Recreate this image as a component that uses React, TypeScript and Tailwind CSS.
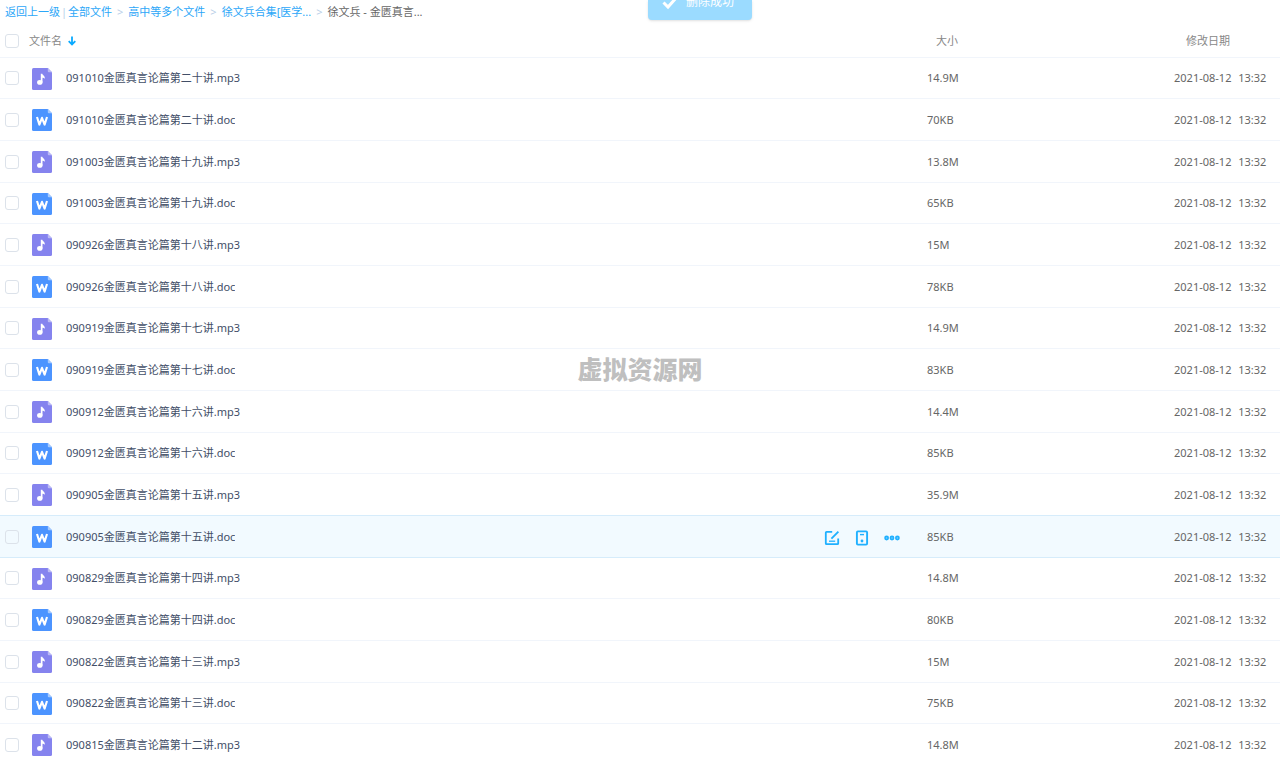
import React from 'react';

type Kind = 'mp3' | 'doc';

interface FileEntry {
  stem: string;
  kind: Kind;
  size: string;
}

const files: FileEntry[] = [
  { stem: '091010金匮真言论篇第二十讲', kind: 'mp3', size: '14.9M' },
  { stem: '091010金匮真言论篇第二十讲', kind: 'doc', size: '70KB' },
  { stem: '091003金匮真言论篇第十九讲', kind: 'mp3', size: '13.8M' },
  { stem: '091003金匮真言论篇第十九讲', kind: 'doc', size: '65KB' },
  { stem: '090926金匮真言论篇第十八讲', kind: 'mp3', size: '15M' },
  { stem: '090926金匮真言论篇第十八讲', kind: 'doc', size: '78KB' },
  { stem: '090919金匮真言论篇第十七讲', kind: 'mp3', size: '14.9M' },
  { stem: '090919金匮真言论篇第十七讲', kind: 'doc', size: '83KB' },
  { stem: '090912金匮真言论篇第十六讲', kind: 'mp3', size: '14.4M' },
  { stem: '090912金匮真言论篇第十六讲', kind: 'doc', size: '85KB' },
  { stem: '090905金匮真言论篇第十五讲', kind: 'mp3', size: '35.9M' },
  { stem: '090905金匮真言论篇第十五讲', kind: 'doc', size: '85KB' },
  { stem: '090829金匮真言论篇第十四讲', kind: 'mp3', size: '14.8M' },
  { stem: '090829金匮真言论篇第十四讲', kind: 'doc', size: '80KB' },
  { stem: '090822金匮真言论篇第十三讲', kind: 'mp3', size: '15M' },
  { stem: '090822金匮真言论篇第十三讲', kind: 'doc', size: '75KB' },
  { stem: '090815金匮真言论篇第十二讲', kind: 'mp3', size: '14.8M' },
];

const ACTIVE_ROW = 11;

function FileIcon({ kind }: { kind: Kind }) {
  const audio = kind === 'mp3';
  return (
    <svg width="20" height="22" viewBox="0 0 20 22" className="mt-px shrink-0" aria-hidden="true">
      <path d="M1.5 0H15.8L20 4.2V20.5Q20 22 18.5 22H1.5Q0 22 0 20.5V1.5Q0 0 1.5 0Z" fill={audio ? '#8583ee' : '#4c94ff'} />
      <path d="M15.8 0L20 4.2H16.8Q15.8 4.2 15.8 3.2Z" fill={audio ? '#bbbaf6' : '#a6caff'} />
      {audio ? (
        <g fill="#fff">
          <ellipse cx="7.8" cy="14.4" rx="2.7" ry="2.4" />
          <path d="M8.8 5.8H10.3C10.5 7.4 12.8 7.6 12.8 9.8V10.8C11.9 10 11.3 9.8 10.5 9.8V14.4H8.8Z" />
        </g>
      ) : (
        <path d="M5 8L7.4 15.6L10 8.8L12.6 15.6L15 8" fill="none" stroke="#fff" strokeWidth="2.1" strokeLinejoin="round" />
      )}
    </svg>
  );
}

function Tick({ label }: { label: string }) {
  return (
    <input
      type="checkbox"
      aria-label={label}
      className="block size-[14px] shrink-0 appearance-none rounded-[3px] border border-[#dce2ea] bg-transparent checked:bg-[#09aaff]"
    />
  );
}

function RowActions() {
  return (
    <div className="flex items-center gap-3.5 pt-0.5 text-[#1fb0ff]">
      <button type="button" aria-label="编辑" className="size-4">
        <svg width="16" height="16" viewBox="0 0 16 16" fill="none" stroke="currentColor" strokeWidth="1.8">
          <path d="M8.2 1.8H2.6Q1.8 1.8 1.8 2.6V13.4Q1.8 14.2 2.6 14.2H13.4Q14.2 14.2 14.2 13.4V8.6" />
          <path d="M14.4 1.6L7.4 8.6" />
          <path d="M5 11.2H11.2" strokeWidth="1.3" />
        </svg>
      </button>
      <button type="button" aria-label="发送到手机" className="size-4">
        <svg width="16" height="16" viewBox="0 0 16 16" fill="none" stroke="currentColor" strokeWidth="1.9">
          <rect x="2.9" y="1.4" width="10.2" height="13.2" rx="1" />
          <path d="M6 4.6H10" strokeWidth="1.4" />
          <circle cx="8" cy="11" r="1.4" fill="currentColor" stroke="none" />
        </svg>
      </button>
      <button type="button" aria-label="更多" className="size-4">
        <svg width="16" height="16" viewBox="0 0 16 16" fill="none" stroke="currentColor" strokeWidth="1.6">
          <circle cx="2.6" cy="8" r="1.6" fill="#7fd0ff" />
          <circle cx="8" cy="8" r="1.6" fill="#7fd0ff" />
          <circle cx="13.4" cy="8" r="1.6" fill="#7fd0ff" />
        </svg>
      </button>
    </div>
  );
}

function Breadcrumb() {
  const link = 'text-[#2ca7f8]';
  const sep = 'px-[5px] text-[#b9cfe8]';
  return (
    <nav aria-label="路径" className="flex h-6 items-center whitespace-nowrap pl-[5px]">
      <a href="#back" className={link}>返回上一级</a>
      <span className="px-px text-[#b9cfe8]">|</span>
      <a href="#all" className={link}>全部文件</a>
      <span className={sep}>&gt;</span>
      <a href="#school" className={link}>高中等多个文件</a>
      <span className={sep}>&gt;</span>
      <a href="#collection" className={link}>徐文兵合集[医学...</a>
      <span className={sep}>&gt;</span>
      <span className="text-[#666]">徐文兵 - 金匮真言...</span>
    </nav>
  );
}

function FileRow({ file, index }: { file: FileEntry; index: number }) {
  const active = index === ACTIVE_ROW;
  const line = active || index === ACTIVE_ROW - 1 ? 'border-[#d6ecfb]' : 'border-[#f1f5fb]';
  const cell = `border-b p-0 ${line}`;
  const name = `${file.stem}.${file.kind}`;
  return (
    <tr className={`h-[42px] nth-[3n+1]:h-[41px] ${active ? 'bg-[#f2faff]' : ''}`}>
      <td className={cell}>
        <div className="flex items-center pl-[5px] pr-[27px]">
          <Tick label={name} />
          <div className="ml-[13px] flex min-w-0 flex-1 items-center gap-3.5">
            <FileIcon kind={file.kind} />
            <span className="truncate text-[#424e67]">{name}</span>
          </div>
          {active && <RowActions />}
        </div>
      </td>
      <td className={cell}>{file.size}</td>
      <td className={cell}>
        <time dateTime="2021-08-12T13:32" className="whitespace-nowrap">
          2021-08-12 <span className="ml-1">13:32</span>
        </time>
      </td>
    </tr>
  );
}

export default function App() {
  return (
    <div className="relative h-screen overflow-hidden bg-white font-['Noto_Sans','Noto_Sans_CJK_SC',sans-serif] text-[11px] leading-4 text-[#666]">
      <Breadcrumb />
      <table className="w-full table-fixed border-separate border-spacing-0 text-left">
        <colgroup>
          <col />
          <col className="w-[247px]" />
          <col className="w-[106px]" />
        </colgroup>
        <thead>
          <tr className="h-[34px] text-[#888]">
            <th className="border-b border-[#f1f5fb] p-0 font-normal">
              <div className="flex items-center pl-[5px]">
                <Tick label="全选" />
                <span className="ml-2.5">文件名</span>
                <svg width="8" height="10" viewBox="0 0 8 10" className="ml-1.5" fill="none" stroke="#09aaff" strokeWidth="1.8" aria-hidden="true">
                  <path d="M4 0.5V8.5M0.7 5.2L4 8.5L7.3 5.2" />
                </svg>
              </div>
            </th>
            <th className="border-b border-[#f1f5fb] p-0 pl-[9px] font-normal">大小</th>
            <th className="border-b border-[#f1f5fb] p-0 pl-3 font-normal">修改日期</th>
          </tr>
        </thead>
        <tbody>
          {files.map((file, i) => (
            <FileRow key={`${file.stem}.${file.kind}`} file={file} index={i} />
          ))}
        </tbody>
      </table>

      <div className="pointer-events-none absolute inset-x-0 top-[350px] text-center font-['Noto_Sans_CJK_SC',sans-serif] text-[25px] font-black leading-9 text-[#bfbfbf]">
        虚拟资源网
      </div>

      <div className="pointer-events-none absolute inset-x-0 top-0 flex justify-center pl-[120px]">
        <div role="status" className="flex h-5 w-[104px] items-start gap-2 rounded-b bg-[#9bdbff] pl-3.5 text-[12px] leading-4 text-white shadow-sm">
          <svg width="16" height="16" viewBox="0 0 16 16" className="-mt-1.5" fill="none" stroke="#fff" strokeWidth="3" aria-hidden="true">
            <path d="M1.5 8.5L6 13L14.5 3.5" />
          </svg>
          <span className="-mt-1.5">删除成功</span>
        </div>
      </div>
    </div>
  );
}
